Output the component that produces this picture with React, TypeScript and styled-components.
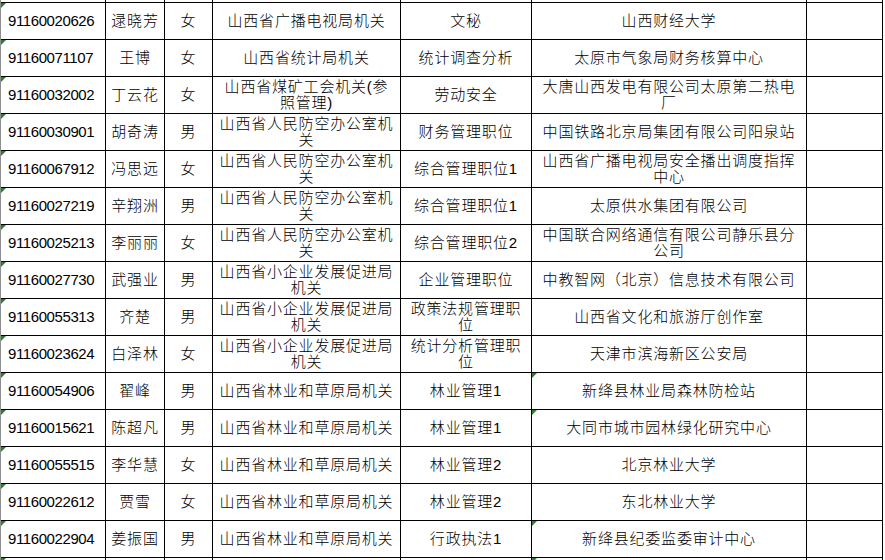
import React from "react";
import styled, { createGlobalStyle } from "styled-components";

const GlobalStyle = createGlobalStyle`
  html, body {
    margin: 0;
    padding: 0;
    background: #fff;
    overflow: hidden;
  }
  body {
    font-family: "Liberation Sans", "Noto Sans CJK SC", sans-serif;
    color: #000;
  }
`;

type Row = {
  id: string;
  name: string;
  sex: string;
  dept: string;
  post: string;
  school: string;
  schoolMark?: boolean;
};

const rows: Row[] = [
  { id: "91160020626", name: "逯晓芳", sex: "女", dept: "山西省广播电视局机关", post: "文秘", school: "山西财经大学" },
  { id: "91160071107", name: "王博", sex: "女", dept: "山西省统计局机关", post: "统计调查分析", school: "太原市气象局财务核算中心" },
  { id: "91160032002", name: "丁云花", sex: "女", dept: "山西省煤矿工会机关(参\n照管理)", post: "劳动安全", school: "大唐山西发电有限公司太原第二热电\n厂" },
  { id: "91160030901", name: "胡奇涛", sex: "男", dept: "山西省人民防空办公室机\n关", post: "财务管理职位", school: "中国铁路北京局集团有限公司阳泉站" },
  { id: "91160067912", name: "冯思远", sex: "女", dept: "山西省人民防空办公室机\n关", post: "综合管理职位1", school: "山西省广播电视局安全播出调度指挥\n中心" },
  { id: "91160027219", name: "辛翔洲", sex: "男", dept: "山西省人民防空办公室机\n关", post: "综合管理职位1", school: "太原供水集团有限公司" },
  { id: "91160025213", name: "李丽丽", sex: "女", dept: "山西省人民防空办公室机\n关", post: "综合管理职位2", school: "中国联合网络通信有限公司静乐县分\n公司" },
  { id: "91160027730", name: "武强业", sex: "男", dept: "山西省小企业发展促进局\n机关", post: "企业管理职位", school: "中教智网（北京）信息技术有限公司" },
  { id: "91160055313", name: "齐楚", sex: "男", dept: "山西省小企业发展促进局\n机关", post: "政策法规管理职\n位", school: "山西省文化和旅游厅创作室" },
  { id: "91160023624", name: "白泽林", sex: "女", dept: "山西省小企业发展促进局\n机关", post: "统计分析管理职\n位", school: "天津市滨海新区公安局" },
  { id: "91160054906", name: "翟峰", sex: "男", dept: "山西省林业和草原局机关", post: "林业管理1", school: "新绛县林业局森林防检站", schoolMark: true },
  { id: "91160015621", name: "陈超凡", sex: "男", dept: "山西省林业和草原局机关", post: "林业管理1", school: "大同市城市园林绿化研究中心", schoolMark: true },
  { id: "91160055515", name: "李华慧", sex: "女", dept: "山西省林业和草原局机关", post: "林业管理2", school: "北京林业大学" },
  { id: "91160022612", name: "贾雪", sex: "女", dept: "山西省林业和草原局机关", post: "林业管理2", school: "东北林业大学" },
  { id: "91160022904", name: "姜振国", sex: "男", dept: "山西省林业和草原局机关", post: "行政执法1", school: "新绛县纪委监委审计中心", schoolMark: true },
];

// the grid lines are the 1px gaps showing the black sheet background
const Sheet = styled.div`
  display: grid;
  grid-template-columns: 104px 58px 47px 187px 130px 274px 75px;
  grid-template-rows: 2px repeat(15, 36px) 20px;
  gap: 1px;
  width: fit-content;
  background: #000;
  border-left: 1px solid #8e8e8e;
  border-right: 1px solid #000;
`;

const Cell = styled.div<{ $mark?: boolean }>`
  position: relative;
  background: #fff;
  display: flex;
  align-items: center;
  justify-content: center;
  text-align: center;
  white-space: pre;
  overflow: hidden;
  font-size: 15px;
  font-weight: 300;
  line-height: 16px;
  letter-spacing: 0.8px;

  &::before {
    content: "";
    display: ${(p) => (p.$mark ? "block" : "none")};
    position: absolute;
    left: 0;
    top: 0;
    width: 0;
    height: 0;
    border-top: 5px solid #2e7d32;
    border-right: 5px solid transparent;
  }
`;

const IdCell = styled(Cell)`
  font-family: "Liberation Sans", sans-serif;
  font-weight: 400;
  letter-spacing: -0.4px;
  justify-content: flex-start;
  padding-left: 7px;
`;

const App = () => {
  return (
    <>
      <GlobalStyle />
      <Sheet>
        {Array.from({ length: 7 }).map((_, i) => (
          <Cell key={`top-${i}`} />
        ))}

        {rows.map((r) => (
          <React.Fragment key={r.id}>
            <IdCell $mark>{r.id}</IdCell>
            <Cell>{r.name}</Cell>
            <Cell>{r.sex}</Cell>
            <Cell>{r.dept}</Cell>
            <Cell>{r.post}</Cell>
            <Cell $mark={r.schoolMark}>{r.school}</Cell>
            <Cell />
          </React.Fragment>
        ))}

        {Array.from({ length: 7 }).map((_, i) => (
          <Cell key={`bottom-${i}`} $mark={i === 0 || i === 5} />
        ))}
      </Sheet>
    </>
  );
};

export default App;
